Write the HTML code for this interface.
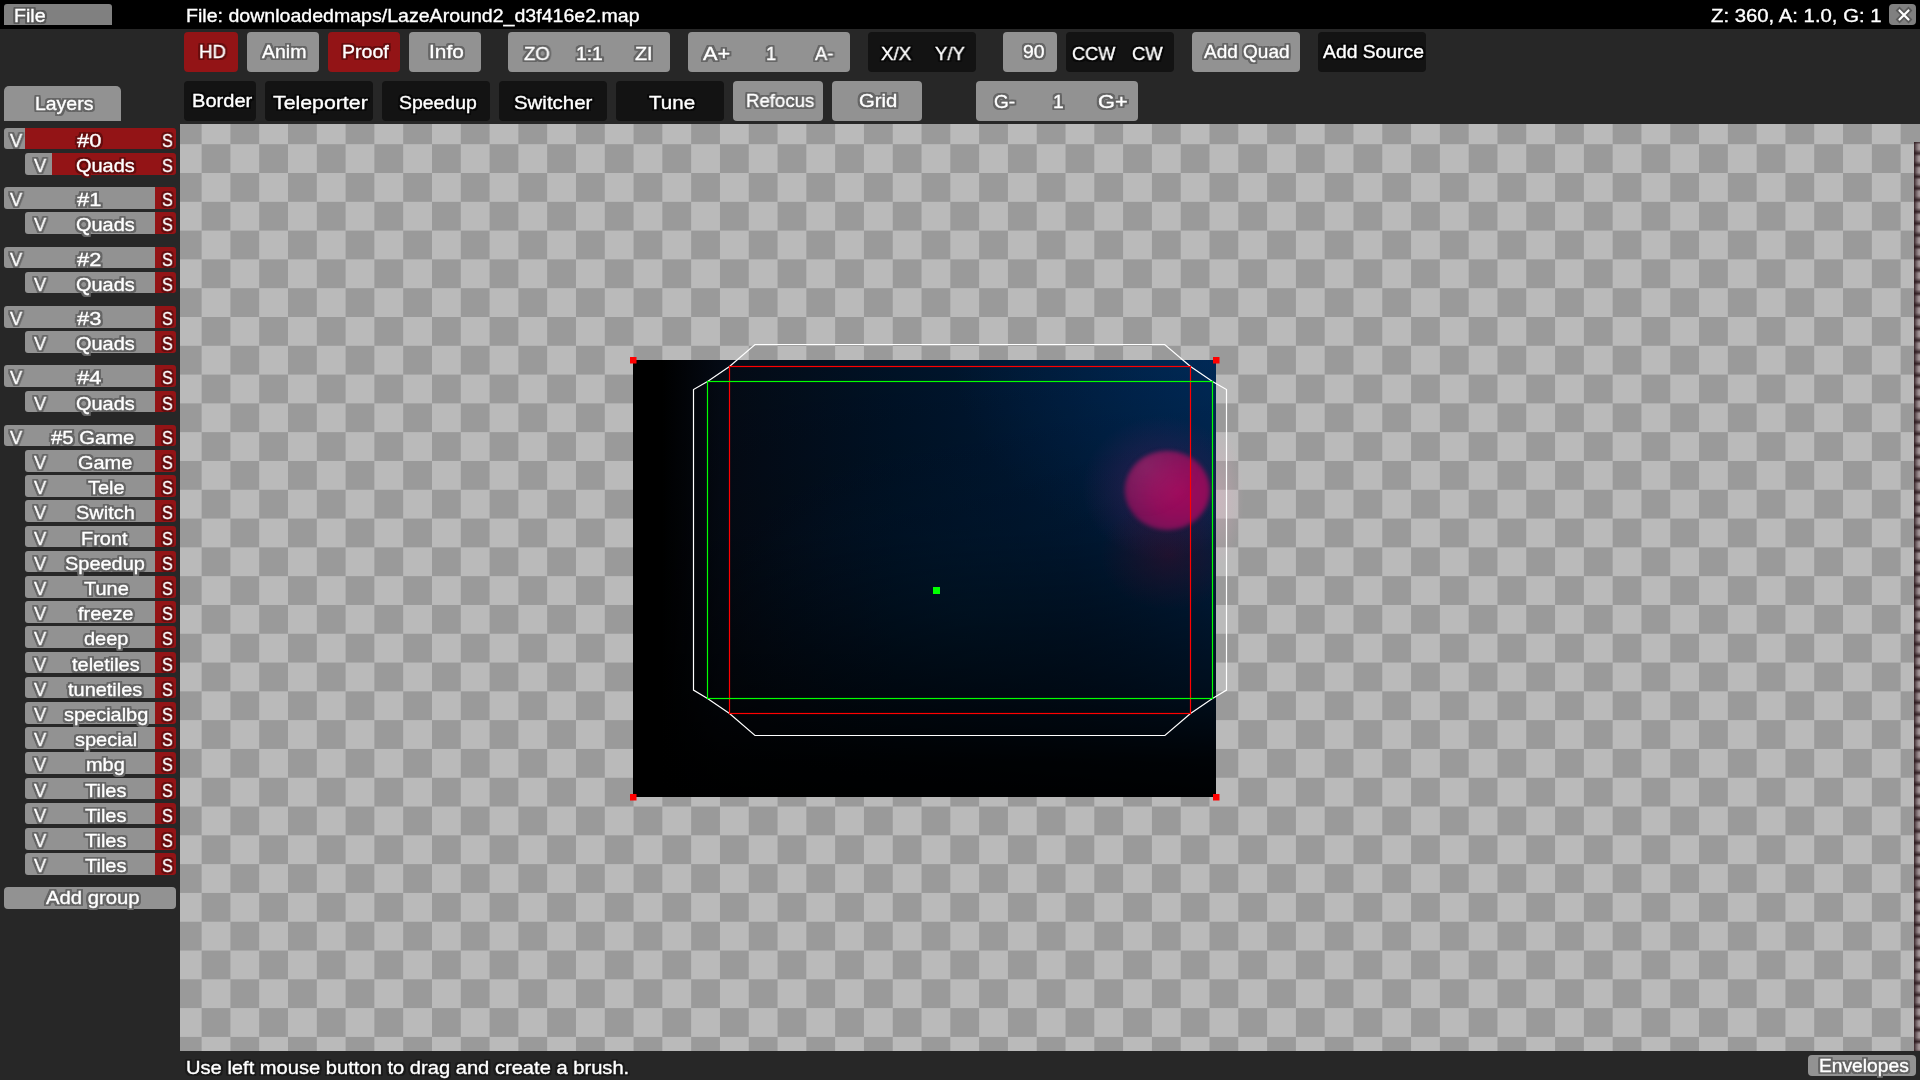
<!DOCTYPE html>
<html><head><meta charset="utf-8"><style>
html,body{margin:0;padding:0;width:1920px;height:1080px;overflow:hidden;background:#272727;}
body{position:relative;font-family:"Liberation Sans", sans-serif;}
.b{position:absolute;}
.t{position:absolute;white-space:nowrap;line-height:21px;height:21px;font-size:19px;color:#fff;transform-origin:0 0;-webkit-text-stroke:0.35px #fff;will-change:transform;}
.og{text-shadow:-2px -2px 0 #666666,-2px -1px 0 #666666,-2px 0px 0 #666666,-2px 1px 0 #666666,-2px 2px 0 #666666,-1px -2px 0 #666666,-1px -1px 0 #666666,-1px 0px 0 #666666,-1px 1px 0 #666666,-1px 2px 0 #666666,0px -2px 0 #666666,0px -1px 0 #666666,0px 1px 0 #666666,0px 2px 0 #666666,1px -2px 0 #666666,1px -1px 0 #666666,1px 0px 0 #666666,1px 1px 0 #666666,1px 2px 0 #666666,2px -2px 0 #666666,2px -1px 0 #666666,2px 0px 0 #666666,2px 1px 0 #666666,2px 2px 0 #666666;}
.of{text-shadow:-2px -2px 0 #5a5a5a,-2px -1px 0 #5a5a5a,-2px 0px 0 #5a5a5a,-2px 1px 0 #5a5a5a,-2px 2px 0 #5a5a5a,-1px -2px 0 #5a5a5a,-1px -1px 0 #5a5a5a,-1px 0px 0 #5a5a5a,-1px 1px 0 #5a5a5a,-1px 2px 0 #5a5a5a,0px -2px 0 #5a5a5a,0px -1px 0 #5a5a5a,0px 1px 0 #5a5a5a,0px 2px 0 #5a5a5a,1px -2px 0 #5a5a5a,1px -1px 0 #5a5a5a,1px 0px 0 #5a5a5a,1px 1px 0 #5a5a5a,1px 2px 0 #5a5a5a,2px -2px 0 #5a5a5a,2px -1px 0 #5a5a5a,2px 0px 0 #5a5a5a,2px 1px 0 #5a5a5a,2px 2px 0 #5a5a5a;}
.or{text-shadow:-2px -2px 0 #660e0f,-2px -1px 0 #660e0f,-2px 0px 0 #660e0f,-2px 1px 0 #660e0f,-2px 2px 0 #660e0f,-1px -2px 0 #660e0f,-1px -1px 0 #660e0f,-1px 0px 0 #660e0f,-1px 1px 0 #660e0f,-1px 2px 0 #660e0f,0px -2px 0 #660e0f,0px -1px 0 #660e0f,0px 1px 0 #660e0f,0px 2px 0 #660e0f,1px -2px 0 #660e0f,1px -1px 0 #660e0f,1px 0px 0 #660e0f,1px 1px 0 #660e0f,1px 2px 0 #660e0f,2px -2px 0 #660e0f,2px -1px 0 #660e0f,2px 0px 0 #660e0f,2px 1px 0 #660e0f,2px 2px 0 #660e0f;}
.od{text-shadow:-2px -2px 0 #0a0a0a,-2px -1px 0 #0a0a0a,-2px 0px 0 #0a0a0a,-2px 1px 0 #0a0a0a,-2px 2px 0 #0a0a0a,-1px -2px 0 #0a0a0a,-1px -1px 0 #0a0a0a,-1px 0px 0 #0a0a0a,-1px 1px 0 #0a0a0a,-1px 2px 0 #0a0a0a,0px -2px 0 #0a0a0a,0px -1px 0 #0a0a0a,0px 1px 0 #0a0a0a,0px 2px 0 #0a0a0a,1px -2px 0 #0a0a0a,1px -1px 0 #0a0a0a,1px 0px 0 #0a0a0a,1px 1px 0 #0a0a0a,1px 2px 0 #0a0a0a,2px -2px 0 #0a0a0a,2px -1px 0 #0a0a0a,2px 0px 0 #0a0a0a,2px 1px 0 #0a0a0a,2px 2px 0 #0a0a0a;}
.ob{text-shadow:-2px -2px 0 #1c1c1c,-2px -1px 0 #1c1c1c,-2px 0px 0 #1c1c1c,-2px 1px 0 #1c1c1c,-2px 2px 0 #1c1c1c,-1px -2px 0 #1c1c1c,-1px -1px 0 #1c1c1c,-1px 0px 0 #1c1c1c,-1px 1px 0 #1c1c1c,-1px 2px 0 #1c1c1c,0px -2px 0 #1c1c1c,0px -1px 0 #1c1c1c,0px 1px 0 #1c1c1c,0px 2px 0 #1c1c1c,1px -2px 0 #1c1c1c,1px -1px 0 #1c1c1c,1px 0px 0 #1c1c1c,1px 1px 0 #1c1c1c,1px 2px 0 #1c1c1c,2px -2px 0 #1c1c1c,2px -1px 0 #1c1c1c,2px 0px 0 #1c1c1c,2px 1px 0 #1c1c1c,2px 2px 0 #1c1c1c;}
</style></head><body>

<div class="b" style="left:0px;top:0px;width:1920px;height:29px;background:#000;border-radius:0;"></div>
<div class="b" style="left:4px;top:4px;width:108px;height:21px;background:#808080;border-radius:3px 3px 0 0;"></div>
<div class="t of" style="left:14.27px;top:4.90px;transform:scaleX(1.0345);">File</div>
<div class="t" style="left:185.67px;top:5.00px;transform:scaleX(1.0297);">File: downloadedmaps/LazeAround2_d3f416e2.map</div>
<div class="t" style="left:1711.00px;top:4.90px;transform:scaleX(1.0692);">Z: 360, A: 1.0, G: 1</div>
<div class="b" style="left:1889px;top:4px;width:27px;height:21px;background:#808080;border-radius:4px;"></div>
<svg class="b" style="left:1889px;top:4px" width="27" height="21" viewBox="0 0 27 21"><path d="M10.5 6.5 L19.5 15.5 M19.5 6.5 L10.5 15.5" stroke="#5a5a5a" stroke-width="5.5" stroke-linecap="square"/><path d="M10.5 6.5 L19.5 15.5 M19.5 6.5 L10.5 15.5" stroke="#fff" stroke-width="2.2" stroke-linecap="round"/></svg>
<div class="b" style="left:180px;top:124px;width:1740px;height:927px;background-color:#bababa;background-image:conic-gradient(transparent 0 25%, #9a9a9a 0 50%, transparent 0 75%, #9a9a9a 0);background-size:57.6px 57.6px;background-position:-7.2px -8.6px;"></div>
<div class="b" style="left:1914px;top:142px;width:6px;height:909px;background-color:#2e1c20;background-image:linear-gradient(to bottom, rgba(45,25,30,0.85) 0%, rgba(45,25,30,0) 22%, rgba(45,25,30,0) 62%, rgba(40,22,26,0.95) 100%),linear-gradient(to right, #3a262a 0%, #6e5e62 35%, #9a8c8f 75%, #a89a9c 100%);background-size:6px 11.7px;"></div>
<div class="b" style="left:633px;top:360px;width:583px;height:437px;background:linear-gradient(to bottom, rgba(0,0,0,0) 0%, rgba(0,0,0,0.15) 40%, rgba(0,0,0,0.6) 75%, rgba(0,0,0,0.92) 92%, rgba(0,0,0,0.97) 100%),radial-gradient(ellipse 45% 45% at 100% 0%, rgba(0,45,95,0.55) 0%, rgba(0,40,85,0) 100%),radial-gradient(ellipse 42% 40% at 58% 58%, rgba(0,28,52,0.7) 0%, rgba(0,24,48,0.35) 50%, rgba(0,20,40,0) 100%),linear-gradient(to right, #000 0%, #000 5%, #040a14 15%, #001226 45%, #001a38 75%, #00234a 100%);"></div>
<div class="b" style="left:1040px;top:380px;width:176px;height:230px;background:radial-gradient(ellipse 70px 55px at 130px 175px, rgba(55,12,40,0.55) 0%, rgba(40,10,35,0) 100%),radial-gradient(ellipse 80px 72px at 122px 108px, rgba(85,35,100,0.6) 0%, rgba(70,30,90,0.3) 55%, rgba(0,0,0,0) 100%);"></div>
<div class="b" style="left:1125px;top:451px;width:85px;height:79px;border-radius:50%;background:radial-gradient(ellipse 75% 75% at 62% 52%, #a00a5c 0%, #900c5a 40%, #7a1258 70%, #6a0e4c 100%);filter:blur(2.2px);"></div>
<div class="b" style="left:1125px;top:451px;width:85px;height:79px;border-radius:50%;background:radial-gradient(ellipse 60% 60% at 25% 20%, rgba(150,60,120,0.35) 0%, rgba(150,60,120,0) 100%);filter:blur(2px);"></div>
<div class="b" style="left:1216px;top:425px;width:28px;height:150px;background:radial-gradient(ellipse 28px 70px at 0% 48%, rgba(230,175,195,0.38) 0%, rgba(230,175,195,0.2) 50%, rgba(230,175,195,0) 100%);"></div>
<svg class="b" style="left:0;top:0" width="1920" height="1080" viewBox="0 0 1920 1080"><polygon fill="none" stroke="#fff" stroke-width="1.2" points="755,344.5 1164.7,344.5 1190.5,366.5 1212.5,381.5 1226.5,389.6 1226.5,690.1 1212.5,698.5 1190.5,713.5 1164.9,735.5 755,735.5 729.5,713.5 707.5,698.5 693.5,690.1 693.5,389.6 707.5,381.5 729.5,366.5"/><rect x="729.5" y="366.5" width="461" height="347" fill="none" stroke="#ff0000" stroke-width="1.2"/><rect x="707.5" y="381.5" width="505" height="317" fill="none" stroke="#00ff00" stroke-width="1.2"/><rect x="630" y="357" width="6.5" height="6.5" fill="#ff0000"/><rect x="1213" y="357" width="6.5" height="6.5" fill="#ff0000"/><rect x="630" y="794" width="6.5" height="6.5" fill="#ff0000"/><rect x="1213" y="794" width="6.5" height="6.5" fill="#ff0000"/><rect x="933" y="587" width="7" height="7" fill="#00ff00"/></svg>
<div class="b" style="left:184px;top:32px;width:54px;height:40px;background:#931416;border-radius:4px;"></div>
<div class="b" style="left:247px;top:32px;width:72px;height:40px;background:#929292;border-radius:4px;"></div>
<div class="b" style="left:328px;top:32px;width:72px;height:40px;background:#931416;border-radius:4px;"></div>
<div class="b" style="left:409px;top:32px;width:72px;height:40px;background:#929292;border-radius:4px;"></div>
<div class="b" style="left:508px;top:32px;width:162px;height:40px;background:#929292;border-radius:4px;"></div>
<div class="b" style="left:688px;top:32px;width:162px;height:40px;background:#929292;border-radius:4px;"></div>
<div class="b" style="left:868px;top:32px;width:108px;height:40px;background:#131313;border-radius:4px;"></div>
<div class="b" style="left:1003px;top:32px;width:54px;height:40px;background:#929292;border-radius:4px;"></div>
<div class="b" style="left:1066px;top:32px;width:108px;height:40px;background:#131313;border-radius:4px;"></div>
<div class="b" style="left:1192px;top:32px;width:108px;height:40px;background:#929292;border-radius:4px;"></div>
<div class="b" style="left:1318px;top:32px;width:108px;height:40px;background:#131313;border-radius:4px;"></div>
<div class="t or" style="left:198.62px;top:40.90px;transform:scaleX(0.9769);">HD</div>
<div class="t og" style="left:262.10px;top:40.90px;transform:scaleX(1.0267);">Anim</div>
<div class="t or" style="left:342.27px;top:40.90px;transform:scaleX(1.0289);">Proof</div>
<div class="t og" style="left:429.30px;top:40.90px;transform:scaleX(1.0967);">Info</div>
<div class="t og" style="left:523.75px;top:43.00px;transform:scaleX(0.9788);">ZO</div>
<div class="t og" style="left:576.48px;top:43.00px;transform:scaleX(1.0160);">1:1</div>
<div class="t og" style="left:635.40px;top:43.00px;transform:scaleX(1.0438);">ZI</div>
<div class="t og" style="left:702.90px;top:43.00px;transform:scaleX(1.1435);">A+</div>
<div class="t og" style="left:765.73px;top:43.00px;transform:scaleX(0.9667);">1</div>
<div class="t og" style="left:815.00px;top:43.00px;transform:scaleX(0.9632);">A-</div>
<div class="t od" style="left:881.25px;top:43.00px;transform:scaleX(0.9850);">X/X</div>
<div class="t od" style="left:935.40px;top:43.00px;transform:scaleX(0.9733);">Y/Y</div>
<div class="t og" style="left:1022.73px;top:40.90px;transform:scaleX(1.0225);">90</div>
<div class="t od" style="left:1071.95px;top:43.00px;transform:scaleX(0.9533);">CCW</div>
<div class="t od" style="left:1131.93px;top:43.00px;transform:scaleX(0.9677);">CW</div>
<div class="t og" style="left:1204.40px;top:41.10px;">Add Quad</div>
<div class="t od" style="left:1323.10px;top:41.10px;transform:scaleX(1.0167);">Add Source</div>
<div class="b" style="left:184px;top:81px;width:72px;height:40px;background:#131313;border-radius:4px;"></div>
<div class="b" style="left:265px;top:81px;width:108px;height:40px;background:#131313;border-radius:4px;"></div>
<div class="b" style="left:382px;top:81px;width:108px;height:40px;background:#131313;border-radius:4px;"></div>
<div class="b" style="left:499px;top:81px;width:108px;height:40px;background:#131313;border-radius:4px;"></div>
<div class="b" style="left:616px;top:81px;width:108px;height:40px;background:#131313;border-radius:4px;"></div>
<div class="b" style="left:733px;top:81px;width:90px;height:40px;background:#929292;border-radius:4px;"></div>
<div class="b" style="left:832px;top:81px;width:90px;height:40px;background:#929292;border-radius:4px;"></div>
<div class="b" style="left:976px;top:81px;width:162px;height:40px;background:#929292;border-radius:4px;"></div>
<div class="t od" style="left:191.69px;top:89.90px;transform:scaleX(1.0563);">Border</div>
<div class="t od" style="left:272.80px;top:92.10px;transform:scaleX(1.1212);">Teleporter</div>
<div class="t od" style="left:398.58px;top:91.50px;transform:scaleX(1.0220);">Speedup</div>
<div class="t od" style="left:514.42px;top:91.70px;transform:scaleX(1.0750);">Switcher</div>
<div class="t od" style="left:648.75px;top:91.70px;transform:scaleX(1.0821);">Tune</div>
<div class="t og" style="left:745.72px;top:89.80px;transform:scaleX(0.9783);">Refocus</div>
<div class="t og" style="left:858.93px;top:89.80px;transform:scaleX(1.0662);">Grid</div>
<div class="t og" style="left:993.60px;top:91.40px;">G-</div>
<div class="t og" style="left:1053.19px;top:91.40px;transform:scaleX(1.0111);">1</div>
<div class="t og" style="left:1097.60px;top:91.40px;transform:scaleX(1.1458);">G+</div>
<div class="b" style="left:4px;top:86px;width:117px;height:35px;background:#929292;border-radius:5px 5px 0 0;"></div>
<div class="t og" style="left:35.48px;top:93.10px;transform:scaleX(1.0232);">Layers</div>
<div class="b" style="left:4px;top:127.80px;width:21px;height:21.6px;background:#929292;border-radius:3px 0 0 3px;"></div>
<div class="b" style="left:25px;top:127.80px;width:130px;height:21.6px;background:#931416;"></div>
<div class="b" style="left:155px;top:127.80px;width:21px;height:21.6px;background:#931416;border-radius:0 3px 3px 0;"></div>
<div class="t og" style="left:9.60px;top:129.70px;transform:scaleX(0.9615);">V</div>
<div class="t or" style="left:161.65px;top:129.70px;transform:scaleX(0.8545);">S</div>
<div class="t or" style="left:76.80px;top:129.70px;transform:scaleX(1.1524);">#0</div>
<div class="b" style="left:25px;top:153.00px;width:27px;height:21.6px;background:#929292;border-radius:3px 0 0 3px;"></div>
<div class="b" style="left:52px;top:153.00px;width:103px;height:21.6px;background:#931416;"></div>
<div class="b" style="left:155px;top:153.00px;width:21px;height:21.6px;background:#931416;border-radius:0 3px 3px 0;"></div>
<div class="t og" style="left:33.55px;top:154.90px;transform:scaleX(0.9615);">V</div>
<div class="t or" style="left:161.65px;top:154.90px;transform:scaleX(0.8545);">S</div>
<div class="t or" style="left:75.67px;top:154.90px;transform:scaleX(1.0500);">Quads</div>
<div class="b" style="left:4px;top:187.20px;width:21px;height:21.6px;background:#929292;border-radius:3px 0 0 3px;"></div>
<div class="b" style="left:25px;top:187.20px;width:130px;height:21.6px;background:#929292;"></div>
<div class="b" style="left:155px;top:187.20px;width:21px;height:21.6px;background:#931416;border-radius:0 3px 3px 0;"></div>
<div class="t og" style="left:9.60px;top:189.10px;transform:scaleX(0.9615);">V</div>
<div class="t or" style="left:161.65px;top:189.10px;transform:scaleX(0.8545);">S</div>
<div class="t og" style="left:76.80px;top:189.10px;transform:scaleX(1.1524);">#1</div>
<div class="b" style="left:25px;top:212.40px;width:27px;height:21.6px;background:#929292;border-radius:3px 0 0 3px;"></div>
<div class="b" style="left:52px;top:212.40px;width:103px;height:21.6px;background:#929292;"></div>
<div class="b" style="left:155px;top:212.40px;width:21px;height:21.6px;background:#931416;border-radius:0 3px 3px 0;"></div>
<div class="t og" style="left:33.55px;top:214.30px;transform:scaleX(0.9615);">V</div>
<div class="t or" style="left:161.65px;top:214.30px;transform:scaleX(0.8545);">S</div>
<div class="t og" style="left:75.67px;top:214.30px;transform:scaleX(1.0500);">Quads</div>
<div class="b" style="left:4px;top:246.60px;width:21px;height:21.6px;background:#929292;border-radius:3px 0 0 3px;"></div>
<div class="b" style="left:25px;top:246.60px;width:130px;height:21.6px;background:#929292;"></div>
<div class="b" style="left:155px;top:246.60px;width:21px;height:21.6px;background:#931416;border-radius:0 3px 3px 0;"></div>
<div class="t og" style="left:9.60px;top:248.50px;transform:scaleX(0.9615);">V</div>
<div class="t or" style="left:161.65px;top:248.50px;transform:scaleX(0.8545);">S</div>
<div class="t og" style="left:76.80px;top:248.50px;transform:scaleX(1.1524);">#2</div>
<div class="b" style="left:25px;top:271.80px;width:27px;height:21.6px;background:#929292;border-radius:3px 0 0 3px;"></div>
<div class="b" style="left:52px;top:271.80px;width:103px;height:21.6px;background:#929292;"></div>
<div class="b" style="left:155px;top:271.80px;width:21px;height:21.6px;background:#931416;border-radius:0 3px 3px 0;"></div>
<div class="t og" style="left:33.55px;top:273.70px;transform:scaleX(0.9615);">V</div>
<div class="t or" style="left:161.65px;top:273.70px;transform:scaleX(0.8545);">S</div>
<div class="t og" style="left:75.67px;top:273.70px;transform:scaleX(1.0500);">Quads</div>
<div class="b" style="left:4px;top:306.00px;width:21px;height:21.6px;background:#929292;border-radius:3px 0 0 3px;"></div>
<div class="b" style="left:25px;top:306.00px;width:130px;height:21.6px;background:#929292;"></div>
<div class="b" style="left:155px;top:306.00px;width:21px;height:21.6px;background:#931416;border-radius:0 3px 3px 0;"></div>
<div class="t og" style="left:9.60px;top:307.90px;transform:scaleX(0.9615);">V</div>
<div class="t or" style="left:161.65px;top:307.90px;transform:scaleX(0.8545);">S</div>
<div class="t og" style="left:76.80px;top:307.90px;transform:scaleX(1.1524);">#3</div>
<div class="b" style="left:25px;top:331.20px;width:27px;height:21.6px;background:#929292;border-radius:3px 0 0 3px;"></div>
<div class="b" style="left:52px;top:331.20px;width:103px;height:21.6px;background:#929292;"></div>
<div class="b" style="left:155px;top:331.20px;width:21px;height:21.6px;background:#931416;border-radius:0 3px 3px 0;"></div>
<div class="t og" style="left:33.55px;top:333.10px;transform:scaleX(0.9615);">V</div>
<div class="t or" style="left:161.65px;top:333.10px;transform:scaleX(0.8545);">S</div>
<div class="t og" style="left:75.67px;top:333.10px;transform:scaleX(1.0500);">Quads</div>
<div class="b" style="left:4px;top:365.40px;width:21px;height:21.6px;background:#929292;border-radius:3px 0 0 3px;"></div>
<div class="b" style="left:25px;top:365.40px;width:130px;height:21.6px;background:#929292;"></div>
<div class="b" style="left:155px;top:365.40px;width:21px;height:21.6px;background:#931416;border-radius:0 3px 3px 0;"></div>
<div class="t og" style="left:9.60px;top:367.30px;transform:scaleX(0.9615);">V</div>
<div class="t or" style="left:161.65px;top:367.30px;transform:scaleX(0.8545);">S</div>
<div class="t og" style="left:76.80px;top:367.30px;transform:scaleX(1.1524);">#4</div>
<div class="b" style="left:25px;top:390.60px;width:27px;height:21.6px;background:#929292;border-radius:3px 0 0 3px;"></div>
<div class="b" style="left:52px;top:390.60px;width:103px;height:21.6px;background:#929292;"></div>
<div class="b" style="left:155px;top:390.60px;width:21px;height:21.6px;background:#931416;border-radius:0 3px 3px 0;"></div>
<div class="t og" style="left:33.55px;top:392.50px;transform:scaleX(0.9615);">V</div>
<div class="t or" style="left:161.65px;top:392.50px;transform:scaleX(0.8545);">S</div>
<div class="t og" style="left:75.67px;top:392.50px;transform:scaleX(1.0500);">Quads</div>
<div class="b" style="left:4px;top:424.80px;width:21px;height:21.6px;background:#929292;border-radius:3px 0 0 3px;"></div>
<div class="b" style="left:25px;top:424.80px;width:130px;height:21.6px;background:#929292;"></div>
<div class="b" style="left:155px;top:424.80px;width:21px;height:21.6px;background:#931416;border-radius:0 3px 3px 0;"></div>
<div class="t og" style="left:9.60px;top:426.70px;transform:scaleX(0.9615);">V</div>
<div class="t or" style="left:161.65px;top:426.70px;transform:scaleX(0.8545);">S</div>
<div class="t og" style="left:50.90px;top:426.70px;transform:scaleX(1.0667);">#5 Game</div>
<div class="b" style="left:25px;top:450.00px;width:27px;height:21.6px;background:#929292;border-radius:3px 0 0 3px;"></div>
<div class="b" style="left:52px;top:450.00px;width:103px;height:21.6px;background:#929292;"></div>
<div class="b" style="left:155px;top:450.00px;width:21px;height:21.6px;background:#931416;border-radius:0 3px 3px 0;"></div>
<div class="t og" style="left:33.55px;top:451.90px;transform:scaleX(0.9615);">V</div>
<div class="t or" style="left:161.65px;top:451.90px;transform:scaleX(0.8545);">S</div>
<div class="t og" style="left:78.30px;top:451.90px;transform:scaleX(1.0500);">Game</div>
<div class="b" style="left:25px;top:475.20px;width:27px;height:21.6px;background:#929292;border-radius:3px 0 0 3px;"></div>
<div class="b" style="left:52px;top:475.20px;width:103px;height:21.6px;background:#929292;"></div>
<div class="b" style="left:155px;top:475.20px;width:21px;height:21.6px;background:#931416;border-radius:0 3px 3px 0;"></div>
<div class="t og" style="left:33.55px;top:477.10px;transform:scaleX(0.9615);">V</div>
<div class="t or" style="left:161.65px;top:477.10px;transform:scaleX(0.8545);">S</div>
<div class="t og" style="left:87.75px;top:477.10px;transform:scaleX(1.0500);">Tele</div>
<div class="b" style="left:25px;top:500.40px;width:27px;height:21.6px;background:#929292;border-radius:3px 0 0 3px;"></div>
<div class="b" style="left:52px;top:500.40px;width:103px;height:21.6px;background:#929292;"></div>
<div class="b" style="left:155px;top:500.40px;width:21px;height:21.6px;background:#931416;border-radius:0 3px 3px 0;"></div>
<div class="t og" style="left:33.55px;top:502.30px;transform:scaleX(0.9615);">V</div>
<div class="t or" style="left:161.65px;top:502.30px;transform:scaleX(0.8545);">S</div>
<div class="t og" style="left:76.20px;top:502.30px;transform:scaleX(1.0500);">Switch</div>
<div class="b" style="left:25px;top:525.60px;width:27px;height:21.6px;background:#929292;border-radius:3px 0 0 3px;"></div>
<div class="b" style="left:52px;top:525.60px;width:103px;height:21.6px;background:#929292;"></div>
<div class="b" style="left:155px;top:525.60px;width:21px;height:21.6px;background:#931416;border-radius:0 3px 3px 0;"></div>
<div class="t og" style="left:33.55px;top:527.50px;transform:scaleX(0.9615);">V</div>
<div class="t or" style="left:161.65px;top:527.50px;transform:scaleX(0.8545);">S</div>
<div class="t og" style="left:81.45px;top:527.50px;transform:scaleX(1.0500);">Front</div>
<div class="b" style="left:25px;top:550.80px;width:27px;height:21.6px;background:#929292;border-radius:3px 0 0 3px;"></div>
<div class="b" style="left:52px;top:550.80px;width:103px;height:21.6px;background:#929292;"></div>
<div class="b" style="left:155px;top:550.80px;width:21px;height:21.6px;background:#931416;border-radius:0 3px 3px 0;"></div>
<div class="t og" style="left:33.55px;top:552.70px;transform:scaleX(0.9615);">V</div>
<div class="t or" style="left:161.65px;top:552.70px;transform:scaleX(0.8545);">S</div>
<div class="t og" style="left:65.17px;top:552.70px;transform:scaleX(1.0500);">Speedup</div>
<div class="b" style="left:25px;top:576.00px;width:27px;height:21.6px;background:#929292;border-radius:3px 0 0 3px;"></div>
<div class="b" style="left:52px;top:576.00px;width:103px;height:21.6px;background:#929292;"></div>
<div class="b" style="left:155px;top:576.00px;width:21px;height:21.6px;background:#931416;border-radius:0 3px 3px 0;"></div>
<div class="t og" style="left:33.55px;top:577.90px;transform:scaleX(0.9615);">V</div>
<div class="t or" style="left:161.65px;top:577.90px;transform:scaleX(0.8545);">S</div>
<div class="t og" style="left:83.55px;top:577.90px;transform:scaleX(1.0500);">Tune</div>
<div class="b" style="left:25px;top:601.20px;width:27px;height:21.6px;background:#929292;border-radius:3px 0 0 3px;"></div>
<div class="b" style="left:52px;top:601.20px;width:103px;height:21.6px;background:#929292;"></div>
<div class="b" style="left:155px;top:601.20px;width:21px;height:21.6px;background:#931416;border-radius:0 3px 3px 0;"></div>
<div class="t og" style="left:33.55px;top:603.10px;transform:scaleX(0.9615);">V</div>
<div class="t or" style="left:161.65px;top:603.10px;transform:scaleX(0.8545);">S</div>
<div class="t og" style="left:78.30px;top:603.10px;transform:scaleX(1.0500);">freeze</div>
<div class="b" style="left:25px;top:626.40px;width:27px;height:21.6px;background:#929292;border-radius:3px 0 0 3px;"></div>
<div class="b" style="left:52px;top:626.40px;width:103px;height:21.6px;background:#929292;"></div>
<div class="b" style="left:155px;top:626.40px;width:21px;height:21.6px;background:#931416;border-radius:0 3px 3px 0;"></div>
<div class="t og" style="left:33.55px;top:628.30px;transform:scaleX(0.9615);">V</div>
<div class="t or" style="left:161.65px;top:628.30px;transform:scaleX(0.8545);">S</div>
<div class="t og" style="left:83.55px;top:628.30px;transform:scaleX(1.0500);">deep</div>
<div class="b" style="left:25px;top:651.60px;width:27px;height:21.6px;background:#929292;border-radius:3px 0 0 3px;"></div>
<div class="b" style="left:52px;top:651.60px;width:103px;height:21.6px;background:#929292;"></div>
<div class="b" style="left:155px;top:651.60px;width:21px;height:21.6px;background:#931416;border-radius:0 3px 3px 0;"></div>
<div class="t og" style="left:33.55px;top:653.50px;transform:scaleX(0.9615);">V</div>
<div class="t or" style="left:161.65px;top:653.50px;transform:scaleX(0.8545);">S</div>
<div class="t og" style="left:72.00px;top:653.50px;transform:scaleX(1.0500);">teletiles</div>
<div class="b" style="left:25px;top:676.80px;width:27px;height:21.6px;background:#929292;border-radius:3px 0 0 3px;"></div>
<div class="b" style="left:52px;top:676.80px;width:103px;height:21.6px;background:#929292;"></div>
<div class="b" style="left:155px;top:676.80px;width:21px;height:21.6px;background:#931416;border-radius:0 3px 3px 0;"></div>
<div class="t og" style="left:33.55px;top:678.70px;transform:scaleX(0.9615);">V</div>
<div class="t or" style="left:161.65px;top:678.70px;transform:scaleX(0.8545);">S</div>
<div class="t og" style="left:68.32px;top:678.70px;transform:scaleX(1.0500);">tunetiles</div>
<div class="b" style="left:25px;top:702.00px;width:27px;height:21.6px;background:#929292;border-radius:3px 0 0 3px;"></div>
<div class="b" style="left:52px;top:702.00px;width:103px;height:21.6px;background:#929292;"></div>
<div class="b" style="left:155px;top:702.00px;width:21px;height:21.6px;background:#931416;border-radius:0 3px 3px 0;"></div>
<div class="t og" style="left:33.55px;top:703.90px;transform:scaleX(0.9615);">V</div>
<div class="t or" style="left:161.65px;top:703.90px;transform:scaleX(0.8545);">S</div>
<div class="t og" style="left:63.60px;top:703.90px;transform:scaleX(1.0500);">specialbg</div>
<div class="b" style="left:25px;top:727.20px;width:27px;height:21.6px;background:#929292;border-radius:3px 0 0 3px;"></div>
<div class="b" style="left:52px;top:727.20px;width:103px;height:21.6px;background:#929292;"></div>
<div class="b" style="left:155px;top:727.20px;width:21px;height:21.6px;background:#931416;border-radius:0 3px 3px 0;"></div>
<div class="t og" style="left:33.55px;top:729.10px;transform:scaleX(0.9615);">V</div>
<div class="t or" style="left:161.65px;top:729.10px;transform:scaleX(0.8545);">S</div>
<div class="t og" style="left:75.15px;top:729.10px;transform:scaleX(1.0500);">special</div>
<div class="b" style="left:25px;top:752.40px;width:27px;height:21.6px;background:#929292;border-radius:3px 0 0 3px;"></div>
<div class="b" style="left:52px;top:752.40px;width:103px;height:21.6px;background:#929292;"></div>
<div class="b" style="left:155px;top:752.40px;width:21px;height:21.6px;background:#931416;border-radius:0 3px 3px 0;"></div>
<div class="t og" style="left:33.55px;top:754.30px;transform:scaleX(0.9615);">V</div>
<div class="t or" style="left:161.65px;top:754.30px;transform:scaleX(0.8545);">S</div>
<div class="t og" style="left:86.17px;top:754.30px;transform:scaleX(1.0500);">mbg</div>
<div class="b" style="left:25px;top:777.60px;width:27px;height:21.6px;background:#929292;border-radius:3px 0 0 3px;"></div>
<div class="b" style="left:52px;top:777.60px;width:103px;height:21.6px;background:#929292;"></div>
<div class="b" style="left:155px;top:777.60px;width:21px;height:21.6px;background:#931416;border-radius:0 3px 3px 0;"></div>
<div class="t og" style="left:33.55px;top:779.50px;transform:scaleX(0.9615);">V</div>
<div class="t or" style="left:161.65px;top:779.50px;transform:scaleX(0.8545);">S</div>
<div class="t og" style="left:85.12px;top:779.50px;transform:scaleX(1.0500);">Tiles</div>
<div class="b" style="left:25px;top:802.80px;width:27px;height:21.6px;background:#929292;border-radius:3px 0 0 3px;"></div>
<div class="b" style="left:52px;top:802.80px;width:103px;height:21.6px;background:#929292;"></div>
<div class="b" style="left:155px;top:802.80px;width:21px;height:21.6px;background:#931416;border-radius:0 3px 3px 0;"></div>
<div class="t og" style="left:33.55px;top:804.70px;transform:scaleX(0.9615);">V</div>
<div class="t or" style="left:161.65px;top:804.70px;transform:scaleX(0.8545);">S</div>
<div class="t og" style="left:85.12px;top:804.70px;transform:scaleX(1.0500);">Tiles</div>
<div class="b" style="left:25px;top:828.00px;width:27px;height:21.6px;background:#929292;border-radius:3px 0 0 3px;"></div>
<div class="b" style="left:52px;top:828.00px;width:103px;height:21.6px;background:#929292;"></div>
<div class="b" style="left:155px;top:828.00px;width:21px;height:21.6px;background:#931416;border-radius:0 3px 3px 0;"></div>
<div class="t og" style="left:33.55px;top:829.90px;transform:scaleX(0.9615);">V</div>
<div class="t or" style="left:161.65px;top:829.90px;transform:scaleX(0.8545);">S</div>
<div class="t og" style="left:85.12px;top:829.90px;transform:scaleX(1.0500);">Tiles</div>
<div class="b" style="left:25px;top:853.20px;width:27px;height:21.6px;background:#929292;border-radius:3px 0 0 3px;"></div>
<div class="b" style="left:52px;top:853.20px;width:103px;height:21.6px;background:#929292;"></div>
<div class="b" style="left:155px;top:853.20px;width:21px;height:21.6px;background:#931416;border-radius:0 3px 3px 0;"></div>
<div class="t og" style="left:33.55px;top:855.10px;transform:scaleX(0.9615);">V</div>
<div class="t or" style="left:161.65px;top:855.10px;transform:scaleX(0.8545);">S</div>
<div class="t og" style="left:85.12px;top:855.10px;transform:scaleX(1.0500);">Tiles</div>
<div class="b" style="left:4px;top:887.4px;width:172px;height:21.600000000000023px;background:#929292;border-radius:4px;"></div>
<div class="t og" style="left:46.10px;top:886.90px;transform:scaleX(1.0667);">Add group</div>
<div class="t ob" style="left:185.64px;top:1056.75px;transform:scaleX(1.0596);">Use left mouse button to drag and create a brush.</div>
<div class="b" style="left:1808px;top:1055px;width:108px;height:21px;background:#929292;border-radius:4px;"></div>
<div class="t og" style="left:1819.49px;top:1055.10px;transform:scaleX(1.0114);">Envelopes</div>
</body></html>
